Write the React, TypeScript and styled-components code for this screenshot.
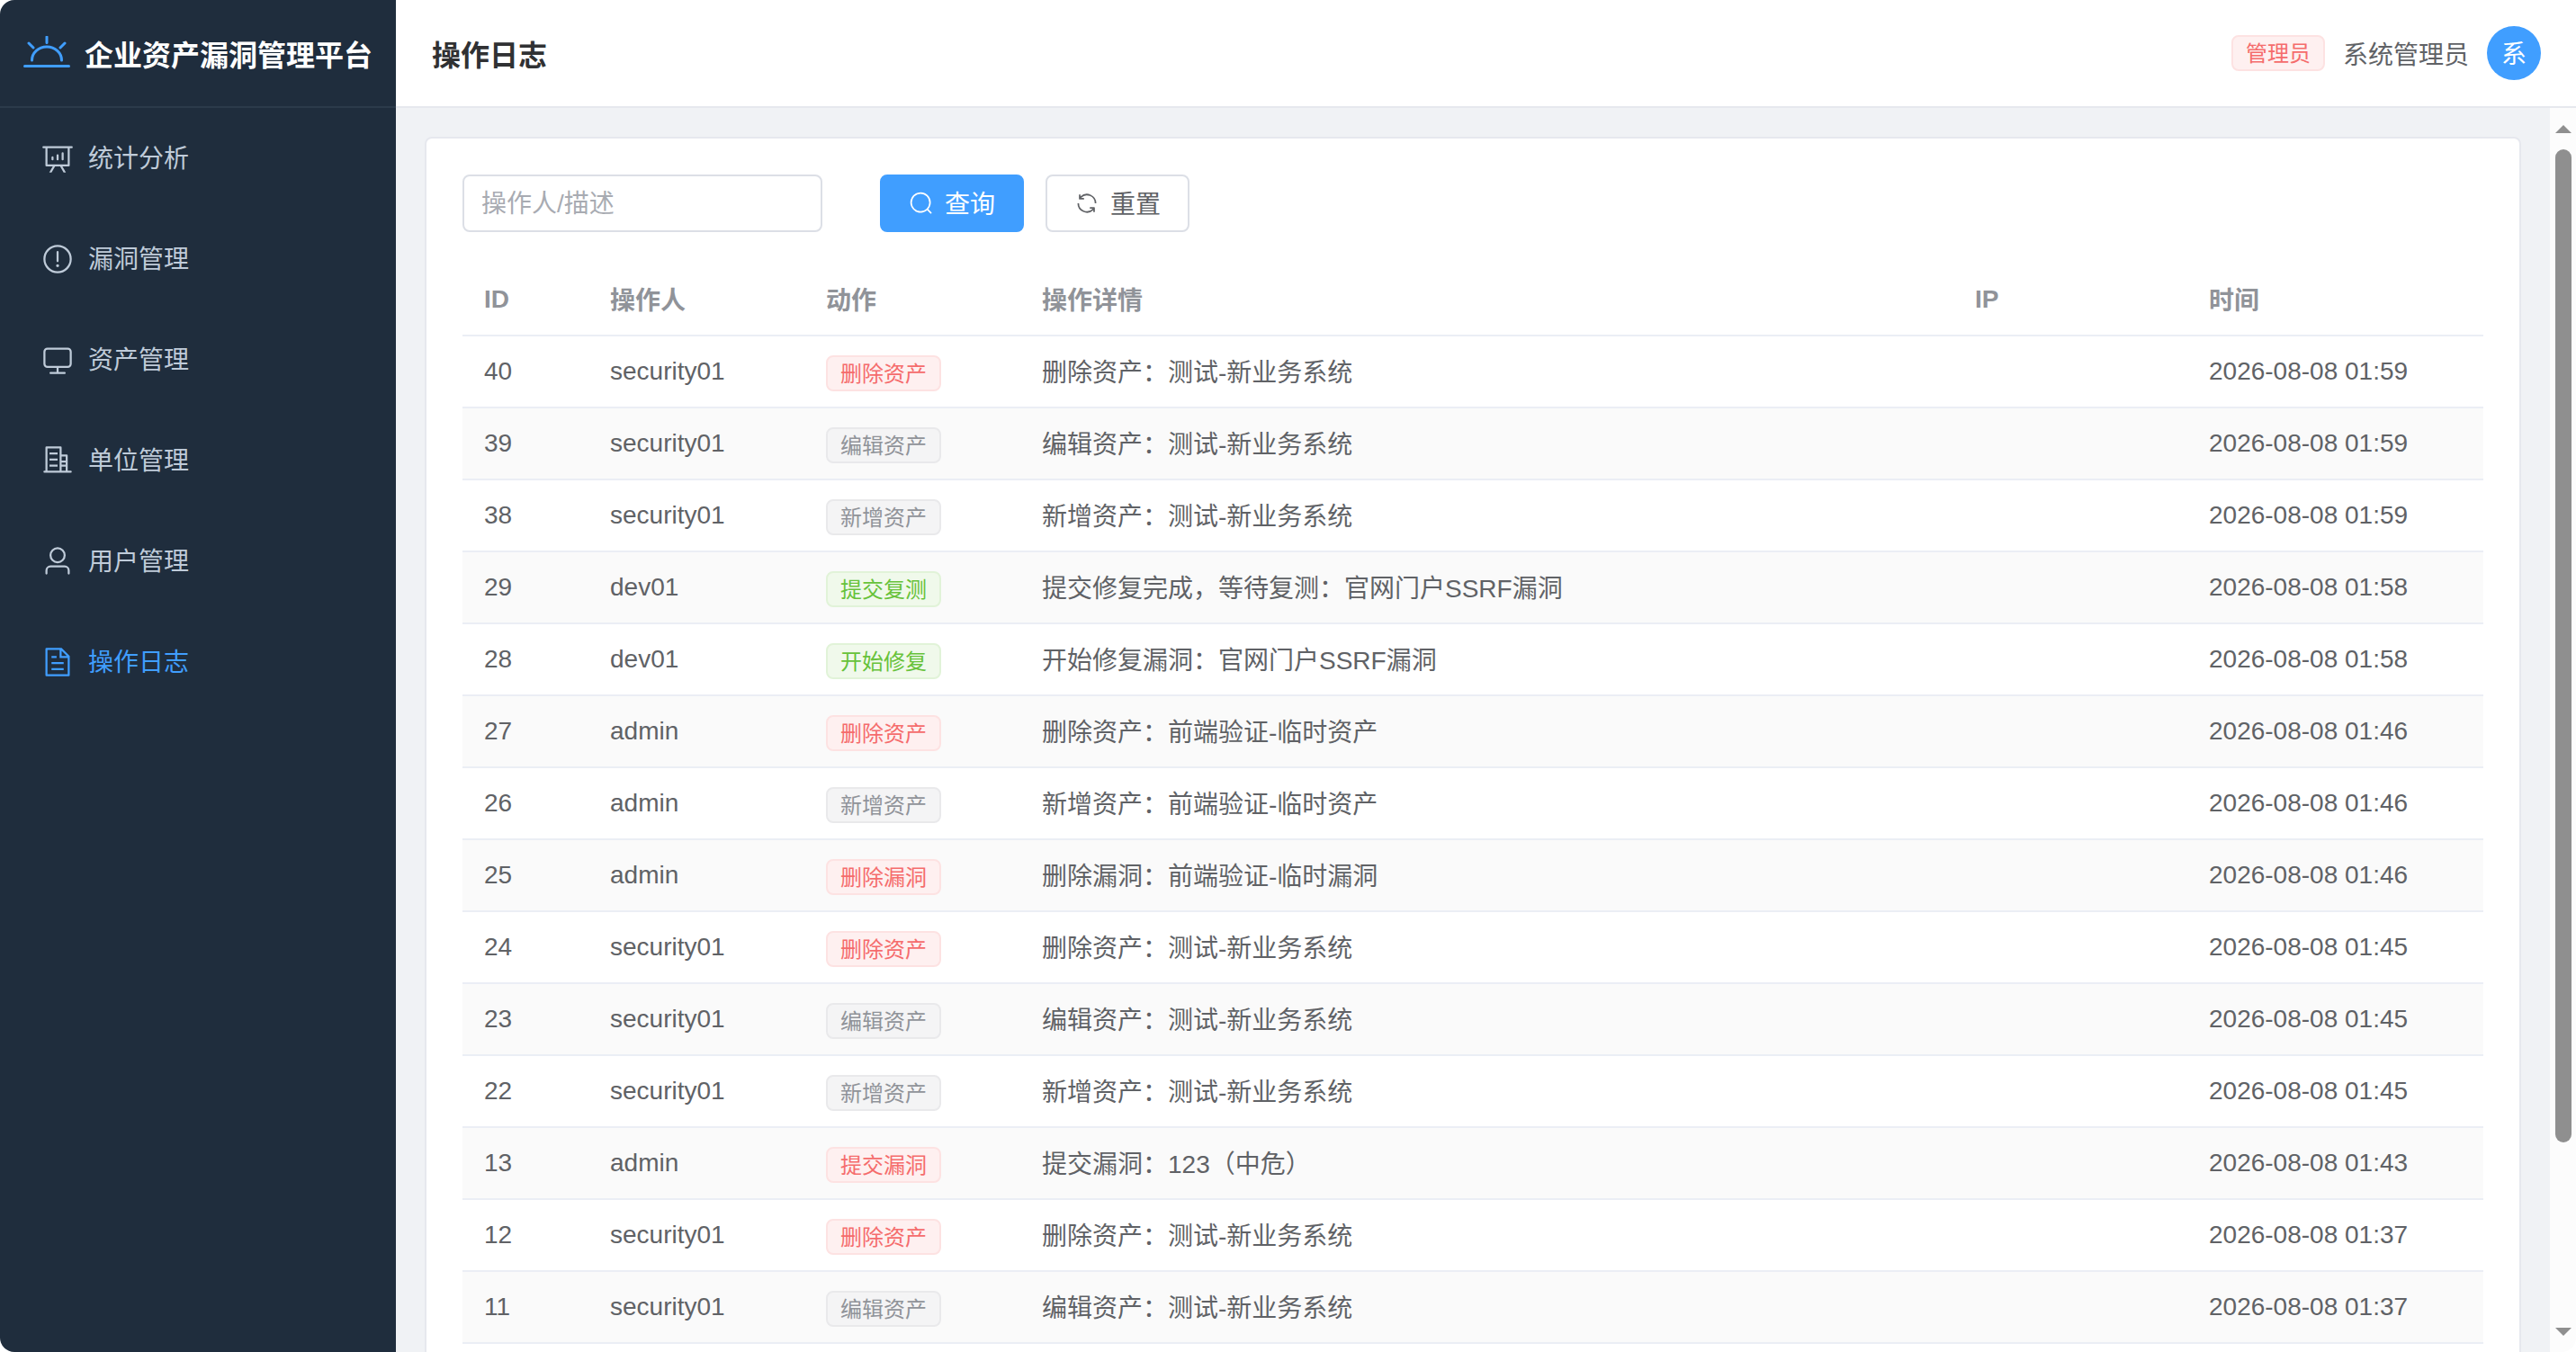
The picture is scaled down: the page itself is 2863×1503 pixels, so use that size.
import React from 'react';
import styled, { createGlobalStyle } from 'styled-components';

const GlobalStyle = createGlobalStyle`
  html, body {
    margin: 0;
    height: 100%;
    background: #fff;
    overflow: hidden;
  }
  body {
    font-family: "Liberation Sans", "Noto Sans CJK SC", sans-serif;
    font-size: 28px;
    color: #606266;
  }
  * {
    box-sizing: border-box;
  }
`;

const Shell = styled.div`
  display: flex;
  height: 100vh;
  border-radius: 16px;
  overflow: hidden;
`;

const Sidebar = styled.aside`
  flex: 0 0 440px;
  background: #1f2d3d;
`;

const Brand = styled.div`
  display: flex;
  align-items: center;
  height: 120px;
  padding-left: 26px;
  gap: 16px;
  border-bottom: 2px solid #2b3a4b;
  color: #fff;
  font-size: 32px;
  font-weight: 700;
  white-space: nowrap;
`;

const BrandMark = styled.svg`
  width: 52px;
  height: 36px;
  flex: none;
  margin-top: -2px;
`;

const Menu = styled.nav`
  display: flex;
  flex-direction: column;
`;

const MenuItem = styled.div<{ $active?: boolean }>`
  display: flex;
  align-items: center;
  height: 112px;
  padding-left: 40px;
  color: ${({ $active }) => ($active ? '#409eff' : '#bfcbd9')};
  font-size: 28px;
`;

const MenuIcon = styled.span`
  display: flex;
  justify-content: center;
  width: 48px;
  margin-right: 10px;
  font-size: 36px;
`;

const MenuLabel = styled.span`
  margin-bottom: 4px;
`;

const Main = styled.div`
  flex: 1;
  min-width: 0;
  display: flex;
  flex-direction: column;
`;

const TopBar = styled.header`
  flex: 0 0 120px;
  display: flex;
  align-items: center;
  justify-content: space-between;
  padding: 0 39px 0 40px;
  background: #fff;
  border-bottom: 2px solid #e6e8ee;
`;

const PageTitle = styled.div`
  font-size: 32px;
  font-weight: 700;
  color: #303133;
`;

const UserBox = styled.div`
  display: flex;
  align-items: center;
  gap: 20px;
`;

const Avatar = styled.div`
  display: flex;
  align-items: center;
  justify-content: center;
  width: 60px;
  height: 60px;
  padding-bottom: 2px;
  border-radius: 50%;
  background: #409eff;
  color: #fff;
  font-size: 28px;
`;

const Body = styled.div`
  flex: 1;
  min-height: 0;
  display: flex;
`;

const Content = styled.main`
  flex: 1;
  min-width: 0;
  overflow: hidden;
  padding: 32px;
  background: #f0f2f5;
`;

const ScrollRail = styled.div`
  flex: 0 0 29px;
  display: flex;
  flex-direction: column;
  align-items: center;
  padding: 19px 0 18px 1px;
  background: #fcfcfc;
`;

const ScrollArrow = styled.div<{ $down?: boolean }>`
  flex: none;
  width: 0;
  height: 0;
  border-left: 9px solid transparent;
  border-right: 9px solid transparent;
  ${({ $down }) =>
    $down ? 'border-top: 9px solid #8f8f8f; margin-top: auto;' : 'border-bottom: 9px solid #8f8f8f;'}
`;

const ScrollThumb = styled.div`
  flex: none;
  width: 18px;
  height: 1104px;
  margin-top: 18px;
  border-radius: 9px;
  background: #8f8f8f;
`;

const Card = styled.section`
  background: #fff;
  border: 2px solid #e6e8ee;
  border-radius: 8px;
  padding: 40px;
`;

const FilterBar = styled.div`
  display: flex;
  align-items: center;
  margin-bottom: 36px;
`;

const SearchInput = styled.input`
  width: 400px;
  height: 64px;
  margin-right: 64px;
  padding: 1px 19px 0;
  border: 2px solid #dcdfe6;
  border-radius: 8px;
  outline: none;
  font: inherit;
  color: #606266;

  &::placeholder {
    color: #a8abb2;
    opacity: 1;
  }
`;

const Button = styled.button<{ $primary?: boolean }>`
  display: inline-flex;
  align-items: center;
  justify-content: center;
  gap: 12px;
  width: 160px;
  height: 64px;
  margin-right: 24px;
  padding: 0;
  border: 2px solid ${({ $primary }) => ($primary ? '#409eff' : '#dcdfe6')};
  border-radius: 8px;
  background: ${({ $primary }) => ($primary ? '#409eff' : '#fff')};
  color: ${({ $primary }) => ($primary ? '#fff' : '#606266')};
  font: inherit;
`;

const ButtonLabel = styled.span`
  margin-bottom: 2px;
`;

const Table = styled.table`
  width: 100%;
  table-layout: fixed;
  border-collapse: separate;
  border-spacing: 0;
`;

const HeadCell = styled.th<{ $latin: boolean }>`
  height: 80px;
  padding: 0 24px ${({ $latin }) => ($latin ? '0' : '3px')};
  border-bottom: 2px solid #ebeef5;
  color: #909399;
  font-weight: 700;
  text-align: left;
`;

const Row = styled.tr<{ $striped: boolean }>`
  background: ${({ $striped }) => ($striped ? '#fafafa' : '#fff')};
`;

const Cell = styled.td`
  height: 80px;
  padding: 0 24px;
  border-bottom: 2px solid #ebeef5;
  white-space: nowrap;
`;

const DetailCell = styled(Cell)`
  padding-bottom: 3px;
`;

type TagKind = 'danger' | 'info' | 'success';

const tagColors: Record<TagKind, { bg: string; border: string; text: string }> = {
  danger: { bg: '#fef0f0', border: '#fde2e2', text: '#f56c6c' },
  info: { bg: '#f4f4f5', border: '#e9e9eb', text: '#909399' },
  success: { bg: '#f0f9eb', border: '#e1f3d8', text: '#67c23a' },
};

const Tag = styled.span<{ $kind: TagKind }>`
  display: flex;
  align-items: center;
  width: fit-content;
  height: 40px;
  padding: 0 14px 3px;
  border: 2px solid ${({ $kind }) => tagColors[$kind].border};
  border-radius: 8px;
  background: ${({ $kind }) => tagColors[$kind].bg};
  color: ${({ $kind }) => tagColors[$kind].text};
  font-size: 24px;
`;

const ActionTag = styled(Tag)`
  margin-top: 3px;
`;

const Icon = ({ d }: { d: string }) => (
  <svg viewBox="0 0 1024 1024" width="1em" height="1em" fill="currentColor">
    <path d={d} />
  </svg>
);

const icons = {
  chart:
    'm665.216 768 110.848 192h-73.856L591.36 768H433.024L322.176 960H248.32l110.848-192H160a32 32 0 0 1-32-32V192H64a32 32 0 0 1 0-64h896a32 32 0 1 1 0 64h-64v544a32 32 0 0 1-32 32zM832 192H192v512h640zM352 448a32 32 0 0 1 32 32v64a32 32 0 0 1-64 0v-64a32 32 0 0 1 32-32m160-64a32 32 0 0 1 32 32v128a32 32 0 0 1-64 0V416a32 32 0 0 1 32-32m160-64a32 32 0 0 1 32 32v192a32 32 0 1 1-64 0V352a32 32 0 0 1 32-32',
  warning:
    'M512 64a448 448 0 1 1 0 896 448 448 0 0 1 0-896m0 832a384 384 0 0 0 0-768 384 384 0 0 0 0 768m48-176a48 48 0 1 1-96 0 48 48 0 0 1 96 0m-48-464a32 32 0 0 1 32 32v288a32 32 0 0 1-64 0V288a32 32 0 0 1 32-32',
  monitor:
    'M544 768v128h192a32 32 0 1 1 0 64H288a32 32 0 1 1 0-64h192V768H192A128 128 0 0 1 64 640V256a128 128 0 0 1 128-128h640a128 128 0 0 1 128 128v384a128 128 0 0 1-128 128zM192 192a64 64 0 0 0-64 64v384a64 64 0 0 0 64 64h640a64 64 0 0 0 64-64V256a64 64 0 0 0-64-64z',
  building:
    'M192 128v704h384V128zm-32-64h448a32 32 0 0 1 32 32v768H128V96a32 32 0 0 1 32-32M256 256h256v64H256zm0 192h256v64H256zm0 192h256v64H256zm384-128h128v64H640zm0 128h128v64H640zM640 320h160a32 32 0 0 1 32 32v480h-64V384H640zM96 832h832a32 32 0 0 1 0 64H96a32 32 0 0 1 0-64',
  user:
    'M512 512a192 192 0 1 0 0-384 192 192 0 0 0 0 384m0 64a256 256 0 1 1 0-512 256 256 0 0 1 0 512m320 320v-96a96 96 0 0 0-96-96H288a96 96 0 0 0-96 96v96a32 32 0 1 1-64 0v-96a160 160 0 0 1 160-160h448a160 160 0 0 1 160 160v96a32 32 0 1 1-64 0',
  document:
    'M832 384H576V128H192v768h640zm-26.496-64L640 154.496V320zM160 64h480l256 256v608a32 32 0 0 1-32 32H160a32 32 0 0 1-32-32V96a32 32 0 0 1 32-32m160 448h384v64H320zm0-192h160v64H320zm0 384h384v64H320z',
  search:
    'm795.904 750.72 124.992 124.928a32 32 0 0 1-45.248 45.248L750.656 795.904a416 416 0 1 1 45.248-45.248zM480 832a352 352 0 1 0 0-704 352 352 0 0 0 0 704',
  refresh:
    'M771.776 794.88A384 384 0 0 1 128 512h64a320 320 0 0 0 555.712 216.448H654.72a32 32 0 1 1 0-64h149.056a32 32 0 0 1 32 32v148.928a32 32 0 1 1-64 0v-50.56zM276.288 295.616h92.992a32 32 0 0 1 0 64H220.16a32 32 0 0 1-32-32V178.56a32 32 0 0 1 64 0v50.56A384 384 0 0 1 896.128 512h-64a320 320 0 0 0-555.776-216.384z',
};

const menuItems = [
  { label: '统计分析', icon: icons.chart },
  { label: '漏洞管理', icon: icons.warning },
  { label: '资产管理', icon: icons.monitor },
  { label: '单位管理', icon: icons.building },
  { label: '用户管理', icon: icons.user },
  { label: '操作日志', icon: icons.document, active: true },
];

const columnWidths = [140, 240, 240, 1037, 260, 329];
const headers = ['ID', '操作人', '动作', '操作详情', 'IP', '时间'];

const logs: { id: number; user: string; action: string; kind: TagKind; detail: string; time: string }[] = [
  { id: 40, user: 'security01', action: '删除资产', kind: 'danger', detail: '删除资产：测试-新业务系统', time: '2026-08-08 01:59' },
  { id: 39, user: 'security01', action: '编辑资产', kind: 'info', detail: '编辑资产：测试-新业务系统', time: '2026-08-08 01:59' },
  { id: 38, user: 'security01', action: '新增资产', kind: 'info', detail: '新增资产：测试-新业务系统', time: '2026-08-08 01:59' },
  { id: 29, user: 'dev01', action: '提交复测', kind: 'success', detail: '提交修复完成，等待复测：官网门户SSRF漏洞', time: '2026-08-08 01:58' },
  { id: 28, user: 'dev01', action: '开始修复', kind: 'success', detail: '开始修复漏洞：官网门户SSRF漏洞', time: '2026-08-08 01:58' },
  { id: 27, user: 'admin', action: '删除资产', kind: 'danger', detail: '删除资产：前端验证-临时资产', time: '2026-08-08 01:46' },
  { id: 26, user: 'admin', action: '新增资产', kind: 'info', detail: '新增资产：前端验证-临时资产', time: '2026-08-08 01:46' },
  { id: 25, user: 'admin', action: '删除漏洞', kind: 'danger', detail: '删除漏洞：前端验证-临时漏洞', time: '2026-08-08 01:46' },
  { id: 24, user: 'security01', action: '删除资产', kind: 'danger', detail: '删除资产：测试-新业务系统', time: '2026-08-08 01:45' },
  { id: 23, user: 'security01', action: '编辑资产', kind: 'info', detail: '编辑资产：测试-新业务系统', time: '2026-08-08 01:45' },
  { id: 22, user: 'security01', action: '新增资产', kind: 'info', detail: '新增资产：测试-新业务系统', time: '2026-08-08 01:45' },
  { id: 13, user: 'admin', action: '提交漏洞', kind: 'danger', detail: '提交漏洞：123（中危）', time: '2026-08-08 01:43' },
  { id: 12, user: 'security01', action: '删除资产', kind: 'danger', detail: '删除资产：测试-新业务系统', time: '2026-08-08 01:37' },
  { id: 11, user: 'security01', action: '编辑资产', kind: 'info', detail: '编辑资产：测试-新业务系统', time: '2026-08-08 01:37' },
];

export default function App() {
  return (
    <>
      <GlobalStyle />
      <Shell>
        <Sidebar>
          <Brand>
            <BrandMark viewBox="0 0 52 36" fill="none" stroke="#409eff" strokeWidth="3" strokeLinecap="round">
              <path d="M1.500 33.500h49" />
              <path d="M9.500 27a16.500 15 0 0 1 33 0" />
              <path d="M26 1v6.500M6 8l5 5M46 8l-5 5" />
            </BrandMark>
            企业资产漏洞管理平台
          </Brand>
          <Menu>
            {menuItems.map((item) => (
              <MenuItem key={item.label} $active={item.active}>
                <MenuIcon>
                  <Icon d={item.icon} />
                </MenuIcon>
                <MenuLabel>{item.label}</MenuLabel>
              </MenuItem>
            ))}
          </Menu>
        </Sidebar>
        <Main>
          <TopBar>
            <PageTitle>操作日志</PageTitle>
            <UserBox>
              <Tag $kind="danger">管理员</Tag>
              <span>系统管理员</span>
              <Avatar>系</Avatar>
            </UserBox>
          </TopBar>
          <Body>
            <Content>
              <Card>
                <FilterBar>
                  <SearchInput placeholder="操作人/描述" />
                  <Button $primary>
                    <Icon d={icons.search} />
                    <ButtonLabel>查询</ButtonLabel>
                  </Button>
                  <Button>
                    <Icon d={icons.refresh} />
                    <ButtonLabel>重置</ButtonLabel>
                  </Button>
                </FilterBar>
                <Table>
                  <colgroup>
                    {columnWidths.map((width, i) => (
                      <col key={i} style={{ width }} />
                    ))}
                  </colgroup>
                  <thead>
                    <tr>
                      {headers.map((title) => (
                        <HeadCell key={title} $latin={title === 'ID' || title === 'IP'}>
                          {title}
                        </HeadCell>
                      ))}
                    </tr>
                  </thead>
                  <tbody>
                    {logs.map((log, i) => (
                      <Row key={log.id} $striped={i % 2 === 1}>
                        <Cell>{log.id}</Cell>
                        <Cell>{log.user}</Cell>
                        <Cell>
                          <ActionTag $kind={log.kind}>{log.action}</ActionTag>
                        </Cell>
                        <DetailCell>{log.detail}</DetailCell>
                        <Cell />
                        <Cell>{log.time}</Cell>
                      </Row>
                    ))}
                  </tbody>
                </Table>
              </Card>
            </Content>
            <ScrollRail>
              <ScrollArrow />
              <ScrollThumb />
              <ScrollArrow $down />
            </ScrollRail>
          </Body>
        </Main>
      </Shell>
    </>
  );
}
